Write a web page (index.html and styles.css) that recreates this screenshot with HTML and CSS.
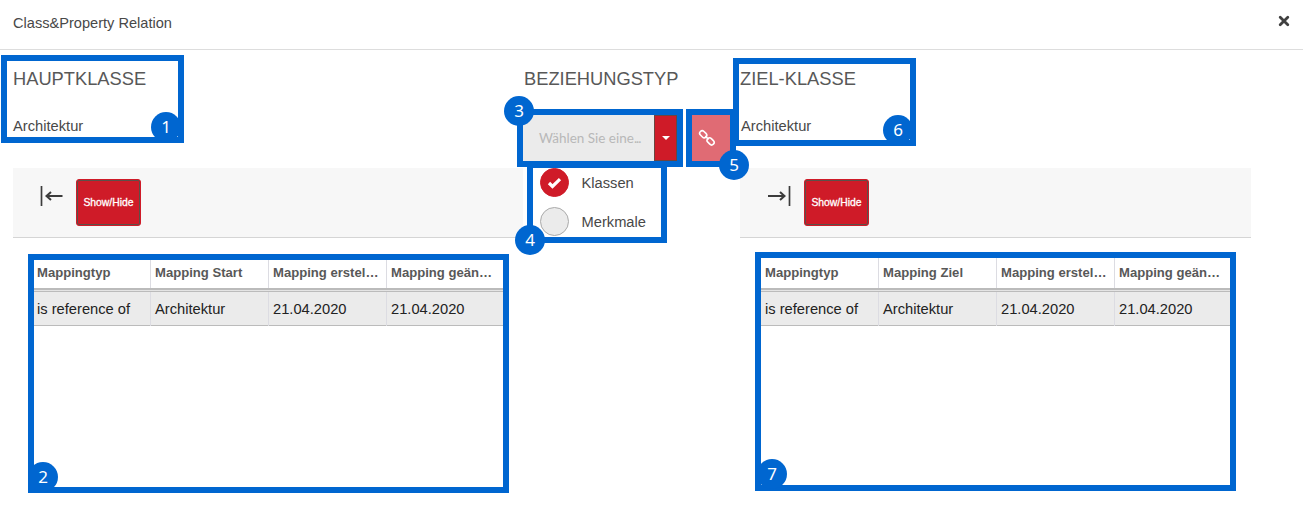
FILE: index.html
```html
<!DOCTYPE html>
<html lang="de">
<head>
<meta charset="utf-8">
<title>Class&amp;Property Relation</title>
<link rel="stylesheet" href="styles.css">
</head>
<body>
<header class="dialog-header">
  <span class="dialog-title">Class&amp;Property Relation</span>
  <svg class="close" width="12" height="12" viewBox="0 0 12 12"><path d="M2.2 2.2L9.8 9.8M9.8 2.2L2.2 9.8" stroke="#404040" stroke-width="2.8" stroke-linecap="round"/></svg>
</header>
<main class="columns">
  <section class="panel">
    <h2 class="heading">HAUPTKLASSE</h2>
    <p class="class-name">Architektur</p>
    <div class="toolbar">
      <svg class="arrow" width="25" height="22" viewBox="0 0 25 22"><path d="M2.5 1V21" stroke="#3c3c3c" stroke-width="1.7"/><path d="M23.5 11H8M12 7L7.500 11L12 15" fill="none" stroke="#3c3c3c" stroke-width="2"/></svg>
      <button class="toggle">Show/Hide</button>
    </div>
    <div class="table">
      <div class="row head"><span>Mappingtyp</span><span>Mapping Start</span><span>Mapping erstel…</span><span>Mapping geän…</span></div>
      <div class="row data"><span>is reference of</span><span>Architektur</span><span>21.04.2020</span><span>21.04.2020</span></div>
    </div>
  </section>
  <section class="relation">
    <h2 class="heading">BEZIEHUNGSTYP</h2>
    <div class="controls">
      <div class="select"><span class="placeholder">Wählen Sie eine<span class="dots">...</span></span><span class="drop"><i class="caret"></i></span></div>
      <button class="link" aria-label="Link"><svg width="18" height="18" viewBox="0 0 18 18" fill="none" stroke="#fff" stroke-width="1.6"><rect x="-3.900" y="-2.500" width="7.800" height="5" rx="2.500" transform="translate(5.200 5.200) rotate(45)"/><rect x="-3.900" y="-2.500" width="7.800" height="5" rx="2.500" transform="translate(12.600 12.400) rotate(45)"/><path d="M7.200 7L10.600 10.400"/></svg></button>
    </div>
    <div class="option"><span class="check on"><svg width="15" height="12" viewBox="0 0 15 12"><path d="M2 6L5.500 9.500L13 2.200" fill="none" stroke="#fff" stroke-width="3.200"/></svg></span><span>Klassen</span></div>
    <div class="option"><span class="check"></span><span>Merkmale</span></div>
  </section>
  <section class="panel target">
    <h2 class="heading">ZIEL-KLASSE</h2>
    <p class="class-name">Architektur</p>
    <div class="toolbar">
      <svg class="arrow" width="25" height="22" viewBox="0 0 25 22"><path d="M22.500 1V21" stroke="#3c3c3c" stroke-width="1.700"/><path d="M1 11H17M13 7L17.500 11L13 15" fill="none" stroke="#3c3c3c" stroke-width="2"/></svg>
      <button class="toggle">Show/Hide</button>
    </div>
    <div class="table">
      <div class="row head"><span>Mappingtyp</span><span>Mapping Ziel</span><span>Mapping erstel…</span><span>Mapping geän…</span></div>
      <div class="row data"><span>is reference of</span><span>Architektur</span><span>21.04.2020</span><span>21.04.2020</span></div>
    </div>
  </section>
</main>
<div class="frame f1"></div><div class="frame f2"></div><div class="frame f3"></div><div class="frame f4"></div><div class="frame f5"></div><div class="frame f6"></div><div class="frame f7"></div>
<span class="badge b1">1</span><span class="badge b2">2</span><span class="badge b3">3</span><span class="badge b4">4</span><span class="badge b5">5</span><span class="badge b6">6</span><span class="badge b7">7</span>
</body>
</html>
```
FILE: styles.css
```css
* { box-sizing: border-box; }
body { margin: 0; width: 1303px; height: 524px; position: relative; overflow: hidden; background: #fff; color: #484848; font: 14.7px/18px "Liberation Sans", Arial, sans-serif; }
.dialog-header { height: 50px; padding: 0 13px 3px; border-bottom: 1px solid #ddd; display: flex; align-items: center; justify-content: space-between; }
.dialog-title { font-size: 14.6px; }
.close { margin-top: -4px; }
.columns { display: grid; grid-template-columns: 510px 217px 511px; padding-left: 13px; }
.heading { margin: 0; padding-top: 18px; height: 65px; font-size: 18.3px; line-height: 22px; font-weight: 400; color: #585858; white-space: nowrap; }
.relation .heading { padding-left: 1px; }
.class-name { margin: 0; padding-top: 2px; height: 53px; }
.target .class-name { padding-left: 1px; }
.toolbar { height: 70px; background: #f7f7f7; border-bottom: 1px solid #d5d5d5; display: flex; align-items: flex-start; padding: 11px 0 0 26px; }
.target .toolbar { padding-left: 27px; }
.arrow { margin-top: 6px; }
.toggle { width: 65px; height: 47px; margin-left: 12px; padding: 0; border: 1px solid #cf1b28; border-radius: 3px; box-shadow: inset 0 0 0 1px #5c5049; background: #cf1b28; color: #fff; font: 10.4px "Liberation Sans", Arial, sans-serif; -webkit-text-stroke: .3px #fff; }
.toggle:focus { outline: 0; }
.table { margin: 20px 0 0 19px; width: 472px; }
.target .table { margin-left: 20px; }
.row { display: grid; grid-template-columns: 119px 118px 118px 117px; color: #222; }
.row span { padding-left: 4px; border-right: 1px solid #dcdce2; white-space: nowrap; }
.row span:first-child { padding-left: 5px; }
.row span:last-child { border-right: 0; }
.head { height: 32px; border-bottom: 2px solid #bbb; font-size: 13.1px; font-weight: 700; color: #585858; }
.head span { line-height: 30px; }
.data { height: 35px; margin-top: 1px; border-top: 1px solid #bbb; border-bottom: 1px solid #bbb; background: #ebebeb; box-shadow: 0 -1px #e4e4e4; }
.data span { line-height: 34px; }
.controls { display: flex; gap: 15px; height: 46px; margin-bottom: 7px; }
.select { display: flex; width: 154px; background: #ebebeb; }
.placeholder { width: 131px; padding-left: 16px; font: 13.5px/46px Lato, sans-serif; color: #b8b8b8; white-space: nowrap; }
.dots { letter-spacing: -1px; }
.drop { width: 23px; background: #cf1b28; border: 1px solid #6b4540; display: flex; align-items: center; justify-content: center; }
.caret { border: 4px solid transparent; border-top-color: #fff; border-bottom: 0; }
.link { width: 38px; height: 46px; padding: 0 8px 0 0; border: 0; background: #e06b74; display: flex; align-items: center; justify-content: center; }
.option { height: 29px; margin: 0 0 10px 17px; display: flex; align-items: center; gap: 12.5px; }
.check { width: 29px; height: 29px; border: 1px solid #aaa; border-radius: 50%; background: #ebebeb; display: flex; align-items: center; justify-content: center; }
.on { border-color: #cf1b28; background: #cf1b28; }
/* Numbered callouts lie over the dialog. */
.frame { position: absolute; border: 6px solid #0066d0; }
.f1 { left: 1px; top: 55px; width: 183px; height: 88px; }
.f2 { left: 28px; top: 254px; width: 481px; height: 239px; }
.f3 { left: 517px; top: 109px; width: 166px; height: 58px; }
.f4 { left: 527px; top: 162px; width: 140px; height: 81px; }
.f5 { left: 686px; top: 109px; width: 50px; height: 58px; }
.f6 { left: 733px; top: 58px; width: 183px; height: 88px; }
.f7 { left: 755px; top: 252px; width: 481px; height: 239px; }
.badge { position: absolute; width: 30px; height: 30px; border-radius: 50%; background: #0066d0; color: #fff; text-align: center; font: 17px/30px "Noto Sans", sans-serif; }
.b1 { left: 151px; top: 112px; }
.b2 { left: 28px; top: 462px; }
.b3 { left: 504px; top: 96px; }
.b4 { left: 515px; top: 225px; }
.b5 { left: 719px; top: 150px; }
.b6 { left: 883px; top: 115px; }
.b7 { left: 757px; top: 459px; }
```
